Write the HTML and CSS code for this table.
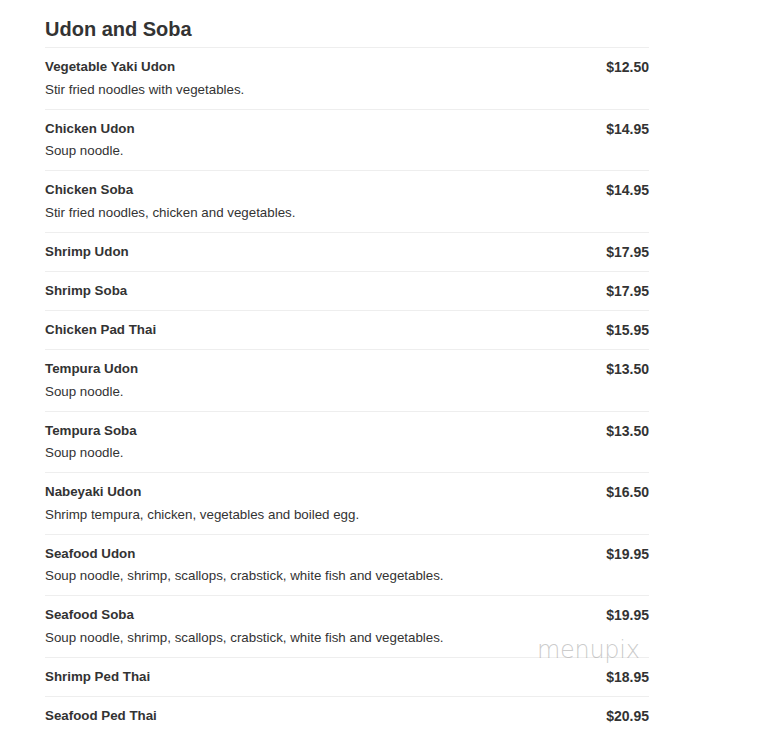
FILE: index.html
```html
<!DOCTYPE html>
<html>
<head>
<meta charset="utf-8">
<link rel="stylesheet" href="styles.css">
</head>
<body>
<div class="menu">
  <h2 class="title">Udon and Soba</h2>
  <div class="list">
    <div class="item"><div class="row"><span class="name">Vegetable Yaki Udon</span><span class="price">$12.50</span></div><div class="desc">Stir fried noodles with vegetables.</div></div>
    <div class="item"><div class="row"><span class="name">Chicken Udon</span><span class="price">$14.95</span></div><div class="desc">Soup noodle.</div></div>
    <div class="item"><div class="row"><span class="name">Chicken Soba</span><span class="price">$14.95</span></div><div class="desc">Stir fried noodles, chicken and vegetables.</div></div>
    <div class="item"><div class="row"><span class="name">Shrimp Udon</span><span class="price">$17.95</span></div></div>
    <div class="item"><div class="row"><span class="name">Shrimp Soba</span><span class="price">$17.95</span></div></div>
    <div class="item"><div class="row"><span class="name">Chicken Pad Thai</span><span class="price">$15.95</span></div></div>
    <div class="item"><div class="row"><span class="name">Tempura Udon</span><span class="price">$13.50</span></div><div class="desc">Soup noodle.</div></div>
    <div class="item"><div class="row"><span class="name">Tempura Soba</span><span class="price">$13.50</span></div><div class="desc">Soup noodle.</div></div>
    <div class="item"><div class="row"><span class="name">Nabeyaki Udon</span><span class="price">$16.50</span></div><div class="desc">Shrimp tempura, chicken, vegetables and boiled egg.</div></div>
    <div class="item"><div class="row"><span class="name">Seafood Udon</span><span class="price">$19.95</span></div><div class="desc">Soup noodle, shrimp, scallops, crabstick, white fish and vegetables.</div></div>
    <div class="item"><div class="row"><span class="name">Seafood Soba</span><span class="price">$19.95</span></div><div class="desc">Soup noodle, shrimp, scallops, crabstick, white fish and vegetables.</div></div>
    <div class="item"><div class="row"><span class="name">Shrimp Ped Thai</span><span class="price">$18.95</span></div></div>
    <div class="item"><div class="row"><span class="name">Seafood Ped Thai</span><span class="price">$20.95</span></div></div>
  </div>
  <div class="watermark">menupix</div>
</div>
</body>
</html>
```
FILE: styles.css
```css
html, body {
  margin: 0;
  padding: 0;
  background: #fff;
}
body {
  font-family: "Liberation Sans", Arial, sans-serif;
  color: #333;
}
.menu {
  position: relative;
  width: 604px;
  margin-left: 45px;
  padding-top: 17px;
}
.title {
  margin: 0;
  font-size: 20px;
  line-height: 24px;
  font-weight: bold;
  color: #333;
  padding-bottom: 6px;
}
.item {
  border-top: 1px solid #eee;
  padding: 10px 0;
}
.row {
  display: flex;
  justify-content: space-between;
  align-items: center;
  height: 18px;
}
.name {
  font-size: 13.33px;
  font-weight: bold;
  line-height: 18px;
}
.price {
  font-size: 14px;
  font-weight: bold;
  line-height: 18px;
}
.desc {
  margin-top: 4.625px;
  font-size: 13.33px;
  line-height: 18px;
}
.watermark {
  position: absolute;
  left: 492px;
  top: 638px;
  font-family: "DejaVu Sans", sans-serif;
  font-weight: 200;
  font-size: 24px;
  line-height: 24px;
  letter-spacing: -0.3px;
  color: rgba(160, 160, 160, 0.55);
  pointer-events: none;
}
```
